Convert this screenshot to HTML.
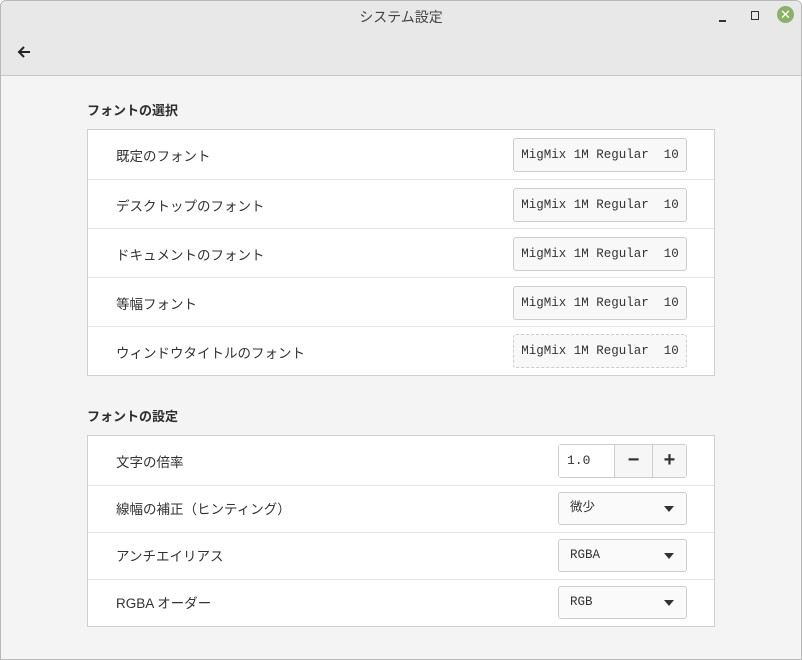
<!DOCTYPE html><html><head><style>
body{margin:0;width:802px;height:660px;background:#fff;font-family:"Liberation Sans","Noto Sans CJK JP",sans-serif;overflow:hidden}
.win{position:absolute;left:0;top:0;width:800px;height:658px;border:1px solid #b8b8b8;border-radius:6px 6px 0 0;background:#f4f4f4;overflow:hidden}
.hdr{position:absolute;left:0;top:0;right:0;height:74px;background:#e8e8e8;border-bottom:1px solid #c8c8c8}
.title{position:absolute;top:6px;width:100%;text-align:center;font-size:14px;color:#444}
.h{position:absolute;left:86px;font-size:13px;font-weight:bold;color:#2e2e2e}
.frame{position:absolute;left:86px;width:626px;border:1px solid #cfcfcf;background:#fff}
.row{position:relative;border-top:1px solid #e6e6e6;font-size:13.5px;color:#333}
.row:first-child{border-top:none}
.row .l{position:absolute;left:28px}
.fb{position:absolute;left:425px;width:174px;height:34px;border:1px solid #cdcdcd;border-radius:3px;background:#f8f8f8;font-family:"Liberation Mono",monospace;font-size:12.5px;color:#333;line-height:32px;text-align:center;box-sizing:border-box;white-space:pre}
.cb{position:absolute;left:470px;width:129px;height:33px;border:1px solid #cdcdcd;border-radius:3px;background:#fafafa;box-sizing:border-box;font-size:12.5px;line-height:31px;padding-left:11px;color:#333;font-family:"Liberation Mono","Noto Sans CJK JP",monospace}
.cb:after{content:"";position:absolute;right:12px;top:13px;border-left:5px solid transparent;border-right:5px solid transparent;border-top:6px solid #333}
</style></head><body><div class="win">
<div class="hdr"><div class="title">システム設定</div>
<div style="position:absolute;left:718px;top:19px;width:7px;height:1.5px;background:#333"></div>
<div style="position:absolute;left:750px;top:10px;width:6px;height:7px;border:1.5px solid #333"></div>
<div style="position:absolute;left:776px;top:5px;width:17px;height:17px;border-radius:50%;background:#8cb06a;color:#fff;font-size:13px;text-align:center;line-height:17px">✕</div>
<svg style="position:absolute;left:15px;top:43px" width="16" height="16" viewBox="0 0 16 16"><path d="M14 8H3M8 3L3 8l5 5" stroke="#222" stroke-width="2" fill="none"/></svg>
</div>
<div class="h" style="top:99px">フォントの選択</div>
<div class="frame" style="top:128px">
<div class="row" style="height:49px"><span class="l" style="top:15px">既定のフォント</span><div class="fb" style="top:8px">MigMix 1M Regular  10</div></div>
<div class="row" style="height:48px"><span class="l" style="top:15px">デスクトップのフォント</span><div class="fb" style="top:8px">MigMix 1M Regular  10</div></div>
<div class="row" style="height:48px"><span class="l" style="top:15px">ドキュメントのフォント</span><div class="fb" style="top:8px">MigMix 1M Regular  10</div></div>
<div class="row" style="height:48px"><span class="l" style="top:15px">等幅フォント</span><div class="fb" style="top:8px">MigMix 1M Regular  10</div></div>
<div class="row" style="height:48px"><span class="l" style="top:15px">ウィンドウタイトルのフォント</span><div class="fb" style="top:7px;border-style:dashed">MigMix 1M Regular  10</div></div>
</div>
<div class="h" style="top:405px">フォントの設定</div>
<div class="frame" style="top:434px">
<div class="row" style="height:49px"><span class="l" style="top:15px">文字の倍率</span>
<div style="position:absolute;left:470px;top:8px;width:129px;height:34px;border:1px solid #cdcdcd;border-radius:3px;box-sizing:border-box;display:flex;font-size:13px">
<div style="width:55px;background:#fff;font-family:'Liberation Mono',monospace;line-height:32px;padding-left:8px;box-sizing:border-box">1.0</div>
<div style="width:37px;border-left:1px solid #cdcdcd;background:#f6f6f6;text-align:center;line-height:30px;font-size:20px;font-weight:bold">−</div>
<div style="flex:1;border-left:1px solid #cdcdcd;background:#f6f6f6;text-align:center;line-height:30px;font-size:20px;font-weight:bold">+</div></div></div>
<div class="row" style="height:46px"><span class="l" style="top:12px">線幅の補正（ヒンティング）</span><div class="cb" style="top:6px">微少</div></div>
<div class="row" style="height:46px"><span class="l" style="top:12px">アンチエイリアス</span><div class="cb" style="top:6px">RGBA</div></div>
<div class="row" style="height:46px"><span class="l" style="top:12px">RGBA オーダー</span><div class="cb" style="top:6px">RGB</div></div>
</div>
</div></body></html>
